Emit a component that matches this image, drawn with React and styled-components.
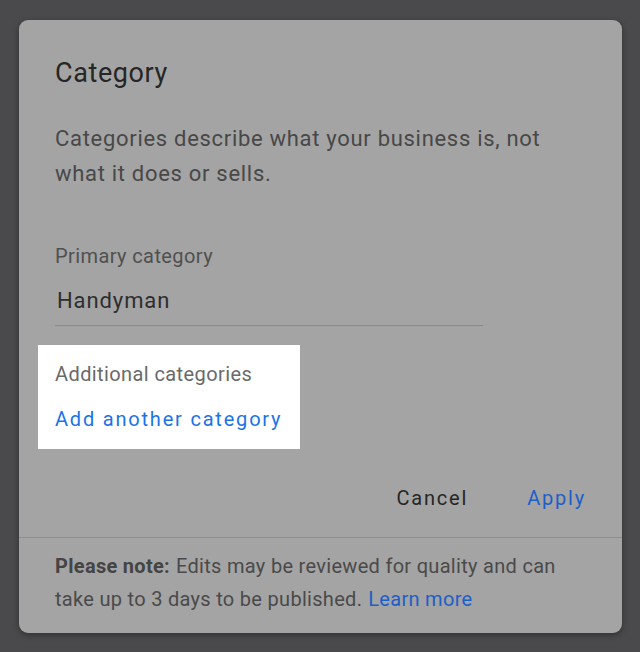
import React from "react";
import styled, { createGlobalStyle } from "styled-components";

const Global = createGlobalStyle`
  html, body { margin: 0; padding: 0; background: #4a4a4c; }
  body { font-family: Roboto, "Noto Sans", sans-serif; -webkit-font-smoothing: antialiased; }
  * { box-sizing: border-box; }
`;

const Page = styled.div`
  width: 640px;
  height: 652px;
  background: #4a4a4c;
  padding: 20px 18px 19px 19px;
  overflow: hidden;
`;

const Dialog = styled.div`
  width: 603px;
  height: 613px;
  background: #a4a4a4;
  border-radius: 9px;
  display: flex;
  flex-direction: column;
  box-shadow: 0 2px 6px rgba(0, 0, 0, 0.35);
`;

const Body = styled.div`
  padding: 37px 36px 0 36px;
  display: flex;
  flex-direction: column;
`;

const Title = styled.h2`
  margin: 0;
  font-size: 27px;
  line-height: 32px;
  font-weight: 400;
  color: #262626;
  letter-spacing: 0.6px;
`;

const Description = styled.p`
  margin: 32px 0 0;
  font-size: 22px;
  line-height: 35px;
  color: #484848;
  letter-spacing: 0.7px;
`;

const Label = styled.div`
  margin-top: ${(p) => p.$mt}px;
  font-size: 20px;
  line-height: 28px;
  color: ${(p) => p.$color};
  letter-spacing: 0.4px;
`;

const Field = styled.div`
  margin-top: 16px;
  width: 428px;
  padding: 0 0 9px 2px;
  border-bottom: 1px solid #8a8a8a;
  font-size: 22px;
  line-height: 30px;
  color: #2e2e2e;
  letter-spacing: 0.9px;
`;

const Highlight = styled.div`
  margin: 19px 0 0 -17px;
  width: 262px;
  height: 104px;
  background: #ffffff;
  padding: 15px 0 0 17px;
`;

const Link = styled.a`
  display: block;
  margin-top: 17px;
  font-size: 20px;
  line-height: 28px;
  color: #1a73e8;
  letter-spacing: 1.8px;
  text-decoration: none;
`;

const Actions = styled.div`
  margin-top: 35px;
  display: flex;
  justify-content: flex-end;
  gap: 59px;
  padding-right: 36px;
`;

const Button = styled.button`
  border: 0;
  background: none;
  padding: 0;
  font-family: Roboto, sans-serif;
  font-size: 20px;
  line-height: 28px;
  font-weight: 400;
  letter-spacing: 1.8px;
  color: ${(p) => (p.$primary ? "#1d5fc8" : "#262626")};
`;

const Divider = styled.div`
  margin-top: 25px;
  height: 1px;
  background: #8e8e8e;
`;

const Note = styled.div`
  margin: 12px 36px 0;
  font-size: 20px;
  line-height: 33px;
  color: #4a4a4a;
  letter-spacing: 0.3px;
`;

const NoteLine = styled.div`
  display: flex;
  gap: 6px;
  white-space: nowrap;
`;

const Strong = styled.b`
  font-weight: 700;
  color: #444;
`;

const NoteLink = styled.a`
  color: #1d5fc8;
  text-decoration: none;
`;

export default function App() {
  return (
    <>
      <Global />
      <Page>
        <Dialog>
          <Body>
            <Title>Category</Title>
            <Description>
              Categories describe what your business is, not what it does or sells.
            </Description>
            <Label $mt={51} $color="#505050">Primary category</Label>
            <Field>Handyman</Field>
            <Highlight>
              <Label $mt={0} $color="#6a6a6a">Additional categories</Label>
              <Link href="#">Add another category</Link>
            </Highlight>
          </Body>
          <Actions>
            <Button>Cancel</Button>
            <Button $primary>Apply</Button>
          </Actions>
          <Divider />
          <Note>
            <NoteLine>
              <Strong>Please note:</Strong>
              <span>Edits may be reviewed for quality and can</span>
            </NoteLine>
            <NoteLine>
              <span>take up to 3 days to be published.</span>
              <NoteLink href="#">Learn more</NoteLink>
            </NoteLine>
          </Note>
        </Dialog>
      </Page>
    </>
  );
}
